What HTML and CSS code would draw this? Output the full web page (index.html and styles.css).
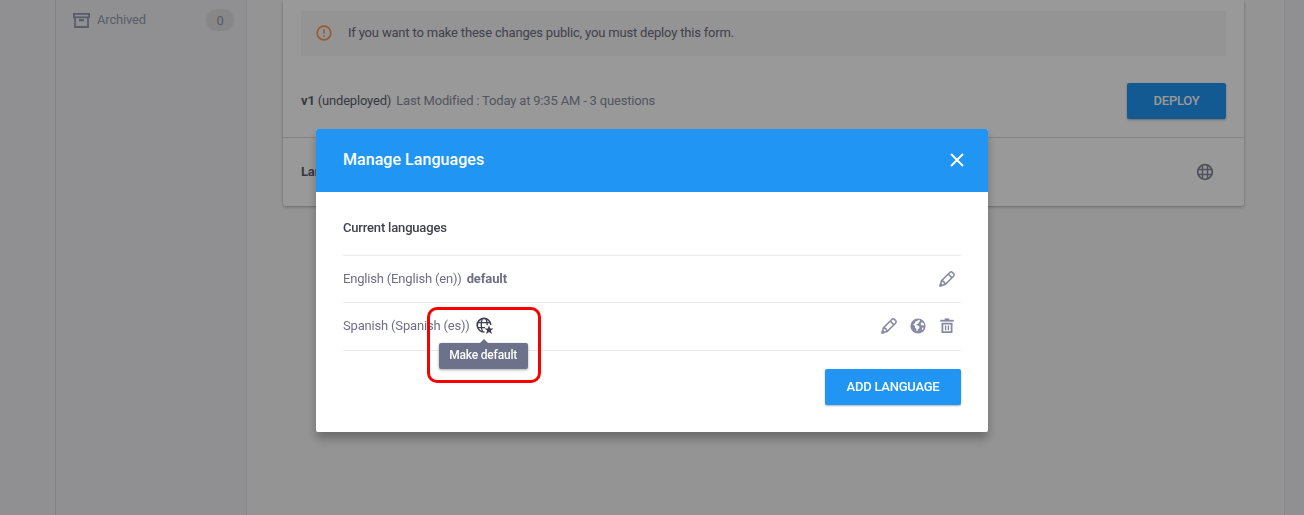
FILE: index.html
```html
<!DOCTYPE html>
<html lang="en">
<head>
<meta charset="utf-8">
<title>Manage Languages</title>
<link rel="stylesheet" href="styles.css">
</head>
<body>
<div class="app">
  <div class="rail"></div>
  <aside class="sidebar">
    <div class="folder">
      <svg class="folder-icon" width="17" height="15" viewBox="0 0 17 15" fill="none" stroke="currentColor" stroke-width="1.8"><rect x="0.9" y="0.9" width="15.2" height="3.4"/><path d="M2 4v10h13V4"/><path d="M6 7.2h5" stroke-width="2.2"/></svg>
      <span class="folder-name">Archived</span>
      <span class="count">0</span>
    </div>
  </aside>
  <main class="content">
    <section class="card">
      <div class="notice">
        <svg width="16" height="16" viewBox="0 0 16 16" fill="none" stroke="#f89b55" stroke-width="1.7"><circle cx="8" cy="8" r="6.8"/><path d="M8 4.2v4.6M8 10.2v1.7" stroke-width="1.5"/></svg>
        <span>If you want to make these changes public, you must deploy this form.</span>
      </div>
      <div class="version">
        <span class="version-text"><b>v1</b> (undeployed)</span>
        <span class="modified">Last Modified : Today at 9:35 AM - 3 questions</span>
        <button class="btn deploy">DEPLOY</button>
      </div>
      <div class="languages">
        <b>Languages:</b>
        <svg width="18" height="18" viewBox="0 0 18 18" fill="none" stroke="currentColor" stroke-width="1.5"><circle cx="9" cy="9" r="7.3" stroke-width="1.8"/><path d="M6.5 2.3v13.4M11.5 2.3v13.4M2.3 6.5h13.4M2.3 11.5h13.4"/></svg>
      </div>
    </section>
  </main>
  <div class="gutter"></div>
</div>

<div class="backdrop">
  <div class="modal">
    <header class="modal-head">
      <span>Manage Languages</span>
      <svg width="14" height="14" viewBox="0 0 14 14" stroke="#fff" stroke-width="1.9"><path d="M1 1l12 12M13 1L1 13"/></svg>
    </header>
    <div class="modal-body">
      <div class="row heading">Current languages</div>
      <div class="row">
        <span>English (English (en))</span><b class="tag">default</b>
        <div class="actions">
          <svg width="18" height="18" viewBox="0 0 18 18" fill="none" stroke="currentColor" stroke-width="1.5" stroke-linejoin="round"><path d="M2.2 15.8l1.2-4.9 8.4-8.4c.9-.9 1.9-.8 2.6-.1l1.2 1.2c.7.7.8 1.7-.1 2.6l-8.4 8.4z"/><path d="M3.6 11.1c1.8.1 3.1 1.4 3.3 3.3M10.4 4.2l3.4 3.4"/><path d="M2 16l.5-2.2 1.7 1.7z" fill="currentColor"/></svg>
        </div>
      </div>
      <div class="row">
        <span>Spanish (Spanish (es))</span>
        <span class="make-default">
          <svg width="18" height="18" viewBox="0 0 18 18" fill="none" stroke="currentColor" stroke-width="1.3"><path d="M8.4 15A6.8 6.8 0 1 1 14.8 8" stroke-width="1.6"/><path d="M6.2 2C4.9 5.2 4.9 11.6 6.6 14.6M10 2c.9 1.8 1.3 4 1.3 6.2M2 5.7h12M2 10.6h7"/><path d="M13 8.3l1.2 3.1h3.3l-2.6 2.1 1 3.4-2.9-2-2.9 2 1-3.4-2.6-2.1h3.3z" fill="currentColor" stroke="none"/></svg>
          <span class="tooltip">Make default</span>
          <span class="highlight"></span>
        </span>
        <div class="actions">
          <svg width="18" height="18" viewBox="0 0 18 18" fill="none" stroke="currentColor" stroke-width="1.5" stroke-linejoin="round"><path d="M2.2 15.8l1.2-4.9 8.4-8.4c.9-.9 1.9-.8 2.6-.1l1.2 1.2c.7.7.8 1.7-.1 2.6l-8.4 8.4z"/><path d="M3.6 11.1c1.8.1 3.1 1.4 3.3 3.3M10.4 4.2l3.4 3.4"/><path d="M2 16l.5-2.2 1.7 1.7z" fill="currentColor"/></svg>
          <svg width="18" height="18" viewBox="0 0 18 18"><circle cx="9" cy="9" r="7.6" fill="currentColor"/><path d="M10.2 2.6l.9 1.6-1.6 1.2-.3 1.5-1.9.3.2 1.1 2.1.4.9 1.3-.4 1.5-1.2.8-.4 1.8-1 .2-.3-2.5-1.2-1.2.1-1.5-1.8-1.7 1-.9 1-.6-.2-1.1 1.9-.8z" fill="#fff"/><path d="M12.2 5.6l1.7-.2 1.3 2.1-.1 1.2-1.4-.7-1.1.4-.9-1.2zM13 10.6l1.5.2-.5 1.5-1.2.9z" fill="#fff"/></svg>
          <svg width="18" height="18" viewBox="0 0 18 18" fill="none" stroke="currentColor"><path d="M2.2 3.7h13.6" stroke-width="1.8"/><path d="M6.7 2.2h4.6" stroke-width="1.6"/><path d="M4.4 6.7h9.2v8.4H4.4z" stroke-width="1.8"/><path d="M7.6 8.5v4.8M10.4 8.5v4.8" stroke-width="1.4"/></svg>
        </div>
      </div>
      <button class="btn add">ADD LANGUAGE</button>
    </div>
  </div>
</div>
</body>
</html>
```
FILE: styles.css
```css
* { box-sizing: border-box; }
body {
  margin: 0;
  height: 515px;
  overflow: hidden;
  font: 13px/20px Roboto, sans-serif;
  letter-spacing: -.18px;
  color: #6d7086;
}
svg { display: block; flex: none; }
b { font-weight: 700; }
.app {
  display: grid;
  grid-template-columns: 56px 191px 1037px 20px;
  height: 515px;
}
.rail, .sidebar, .gutter { background: #f1f1f4; }
.rail { border-right: 1px solid #d9d9dc; }
.sidebar { border-right: 1px solid #e6e6e8; padding: 9px 12px 0 17px; }
.gutter { border-left: 1px solid #e8e8ea; }
.folder { display: flex; align-items: center; height: 22px; color: #979bb0; }
.folder-icon { margin-right: 7px; }
.count {
  margin-left: auto;
  width: 28px;
  height: 22px;
  line-height: 23px;
  border-radius: 11px;
  background: #e2e2e2;
  text-align: center;
}
.content { background: #f7f7f7; padding: 0 40px 0 36px; }
.card {
  height: 206px;
  background: #fff;
  border-radius: 0 0 3px 3px;
  box-shadow: 0 1px 3px rgba(0, 0, 0, .3);
  padding-top: 11px;
}
.notice {
  display: flex;
  align-items: center;
  gap: 16px;
  height: 45px;
  margin: 0 18px;
  padding: 0 15px 2px;
  background: #f7f7f7;
  color: #6b6d7c;
}
.version {
  display: flex;
  align-items: center;
  height: 82px;
  padding: 8px 18px 0;
  border-bottom: 1px solid #dadada;
}
.version-text { color: #5d5f6e; margin-right: 5px; }
.modified { color: #8b8e9f; }
.languages {
  display: flex;
  align-items: center;
  justify-content: space-between;
  height: 68px;
  padding: 0 30px 0 18px;
  color: #5d5f6e;
}
.languages svg { color: #85889c; }
.btn {
  height: 36px;
  padding: 0 0 1px;
  border: 0;
  border-radius: 2px;
  background: #2095f3;
  color: #fff;
  font: 500 13px/34px Roboto, sans-serif;
  letter-spacing: -.24px;
  box-shadow: 0 1px 2px rgba(0, 0, 0, .3);
}
.deploy { width: 99px; margin-left: auto; padding: 1px 0 0; }
.backdrop {
  position: fixed;
  inset: 0;
  padding-top: 129px;
  background: rgba(0, 0, 0, .4);
}
.modal {
  width: 672px;
  height: 303px;
  margin: 0 auto;
  background: #fff;
  border-radius: 2px;
  box-shadow: 0 7px 10px rgba(0, 0, 0, .27);
}
.modal-head {
  display: flex;
  align-items: center;
  justify-content: space-between;
  height: 63px;
  padding: 0 24px 2px 27px;
  border-radius: 2px 2px 0 0;
  background: #2095f3;
  color: #fff;
  font-size: 16px;
  font-weight: 500;
  letter-spacing: .05px;
}
.modal-body {
  display: flex;
  flex-direction: column;
  padding: 8px 27px 0;
}
.row {
  display: flex;
  align-items: center;
  height: 47px;
  border-bottom: 1px solid #e9e9eb;
}
.row.heading { height: 56px; color: #3f414d; font-weight: 500; }
.row:nth-child(3) { height: 48px; padding-bottom: 2px; }
.tag { margin-left: 5px; letter-spacing: -.1px; }
.actions { display: flex; gap: 11px; margin-left: auto; padding-right: 5px; color: #868aa2; }
.make-default { position: relative; margin-left: 6px; color: #3d404e; }
.tooltip {
  position: absolute;
  top: 26px;
  left: -37px;
  width: 89px;
  height: 26px;
  border-radius: 2px;
  background: #6d7189;
  color: #fff;
  font-weight: 500;
  font-size: 12px;
  line-height: 24px;
  text-align: center;
  white-space: nowrap;
  box-shadow: 0 1px 3px rgba(0, 0, 0, .35);
}
.tooltip::before {
  content: "";
  position: absolute;
  left: 41px;
  top: -4px;
  border: solid transparent;
  border-width: 0 4px 4px;
  border-bottom-color: #6d7189;
}
.highlight {
  position: absolute;
  top: -10px;
  left: -49px;
  width: 114px;
  height: 76px;
  border: 3px solid #f60000;
  border-radius: 10px;
}
.add { width: 136px; margin-top: 18px; align-self: flex-end; }
```
